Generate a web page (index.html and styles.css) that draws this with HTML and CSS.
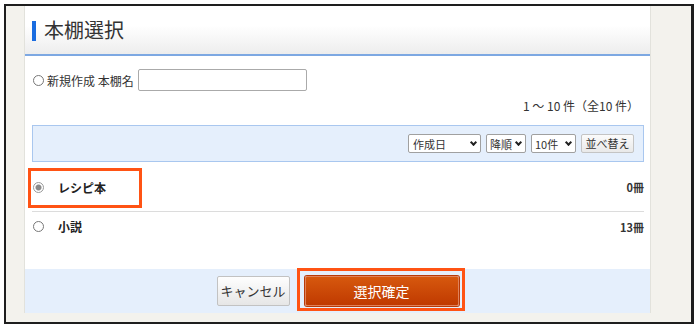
FILE: index.html
```html
<!DOCTYPE html>
<html lang="ja">
<head>
    <meta charset="UTF-8">
    <title>本棚選択</title>
    <link rel="stylesheet" href="styles.css">
</head>
<body>
    <div class="frame">
        <div class="panel">
            <div class="head">
                <span class="head-bar"></span>
                <h1>本棚選択</h1>
            </div>
            <div class="content">
                <div class="new-row">
                    <span class="radio"></span>
                    <span class="new-label">新規作成 本棚名</span>
                    <span class="name-input"></span>
                </div>
                <div class="count">1 ～ 10 件（全10 件）</div>
                <div class="toolbar">
                    <span class="sel sel-date">作成日<i class="chev"></i></span>
                    <span class="sel sel-order">降順<i class="chev"></i></span>
                    <span class="sel sel-num">10件<i class="chev"></i></span>
                    <span class="sort-btn">並べ替え</span>
                </div>
                <div class="shelf shelf-first">
                    <span class="radio checked"></span>
                    <span class="shelf-name">レシピ本</span>
                    <span class="shelf-num">0冊</span>
                    <span class="mark mark-row"></span>
                </div>
                <div class="shelf shelf-last">
                    <span class="radio"></span>
                    <span class="shelf-name">小説</span>
                    <span class="shelf-num">13冊</span>
                </div>
            </div>
            <div class="foot">
                <span class="btn btn-cancel">キャンセル</span>
                <span class="ok-wrap">
                    <span class="btn btn-ok">選択確定</span>
                    <span class="mark mark-ok"></span>
                </span>
            </div>
        </div>
    </div>
</body>
</html>
```

FILE: styles.css
```css
*{
    margin: 0;
    padding: 0;
    box-sizing: border-box;
}
body{
    background: #fff;
    font-family: "Noto Sans CJK JP", "Liberation Sans", sans-serif;
    color: #333;
}
.frame{
    width: 690px;
    height: 320px;
    margin: 4px 0 0 4px;
    border: 2px solid #1e1e1e;
    border-right-width: 3px;
    background: #f3f2ed;
    padding: 0 40px 0 18px;
}
.panel{
    background: #fff;
    border-left: 1px solid #e2e2dc;
    border-right: 1px solid #e2e2dc;
}
.head{
    height: 50px;
    display: flex;
    align-items: center;
    padding-left: 7px;
    background: linear-gradient(#fff, #fff 40%, #ededed);
    border-bottom: 2px solid #7da8e2;
}
.head-bar{
    width: 4px;
    height: 20px;
    background: #1a6ce0;
    margin-right: 8px;
    margin-top: 2px;
}
.head h1{
    font-size: 20px;
    font-weight: normal;
    color: #333;
    line-height: 1;
}
.content{
    padding: 0 6px 0 7px;
}
.new-row{
    display: flex;
    align-items: center;
    height: 24px;
    margin-top: 12px;
}
.radio{
    width: 11px;
    height: 11px;
    border: 1px solid #777;
    border-radius: 50%;
    background: #fff;
    margin: 0 3px 0 1px;
    flex: none;
}
.radio.checked{
    border-color: #999;
    background: radial-gradient(circle, #8a8a8a 0, #8a8a8a 2.5px, #fff 3.5px);
}
.new-label{
    font-size: 12px;
    color: #333;
    margin-right: 4px;
}
.name-input{
    width: 169px;
    height: 22px;
    border: 1px solid #aaa;
    border-radius: 2px;
    background: #fff;
}
.count{
    font-size: 12px;
    text-align: right;
    padding-right: 5px;
    margin-top: 4px;
    height: 20px;
    line-height: 20px;
}
.toolbar{
    margin-top: 9px;
    height: 37px;
    background: #e5effc;
    border: 1px solid #a9c7ef;
    display: flex;
    align-items: center;
    justify-content: flex-end;
    gap: 5px;
    padding-right: 9px;
}
.sel{
    height: 19px;
    border: 1px solid #a0a0a0;
    border-radius: 2px;
    background: #fff;
    font-size: 11px;
    color: #333;
    display: flex;
    align-items: center;
    justify-content: space-between;
    padding: 0 3px 0 4px;
}
.sel-date{ width: 73px; }
.sel-order{ width: 40px; padding-left: 3px; }
.sel-num{ width: 45px; padding-left: 3px; }
.chev{
    width: 5px;
    height: 5px;
    border-right: 2px solid #222;
    border-bottom: 2px solid #222;
    transform: rotate(45deg);
    margin: -3px 1px 0 0;
}
.sort-btn{
    width: 53px;
    height: 19px;
    border: 1px solid #c4c4c4;
    border-radius: 2px;
    background: linear-gradient(#fbfbfb, #e9e9e9);
    font-size: 11px;
    color: #333;
    text-align: center;
    line-height: 17px;
}
.shelf{
    display: flex;
    align-items: center;
    position: relative;
    border-bottom: 1px solid #dcdcdc;
}
.shelf-first{
    height: 47px;
    margin-top: 3px;
    padding-bottom: 2px;
}
.shelf-last{
    height: 29px;
    border-bottom: none;
    margin-bottom: 28px;
}
.shelf-name{
    font-size: 12px;
    font-weight: bold;
    color: #222;
    margin-left: 11px;
}
.shelf-num{
    font-size: 11px;
    font-weight: bold;
    color: #333;
    margin-left: auto;
}
.mark{
    position: absolute;
    border: 3px solid #ff5314;
}
.mark-row{
    left: -4px;
    top: 3px;
    width: 114px;
    height: 40px;
}
.foot{
    height: 44px;
    background: #e5effc;
    display: flex;
    align-items: center;
    justify-content: center;
    gap: 15px;
}
.btn{
    display: block;
    height: 30px;
    font-size: 14px;
    text-align: center;
    line-height: 28px;
    border-radius: 2px;
}
.btn-cancel{
    width: 73px;
    border: 1px solid #c2c2c2;
    background: linear-gradient(#fefefe, #e6e6e6);
    color: #333;
    font-size: 13px;
}
.ok-wrap{
    position: relative;
    display: block;
}
.btn-ok{
    width: 154px;
    border: 1px solid #e0825a;
    background: linear-gradient(#d6580e, #c03a00);
    color: #fff;
    box-shadow: 0 0 0 1px #b83a08;
}
.mark-ok{
    left: -8px;
    top: -8px;
    right: -6px;
    bottom: -5px;
}
```
